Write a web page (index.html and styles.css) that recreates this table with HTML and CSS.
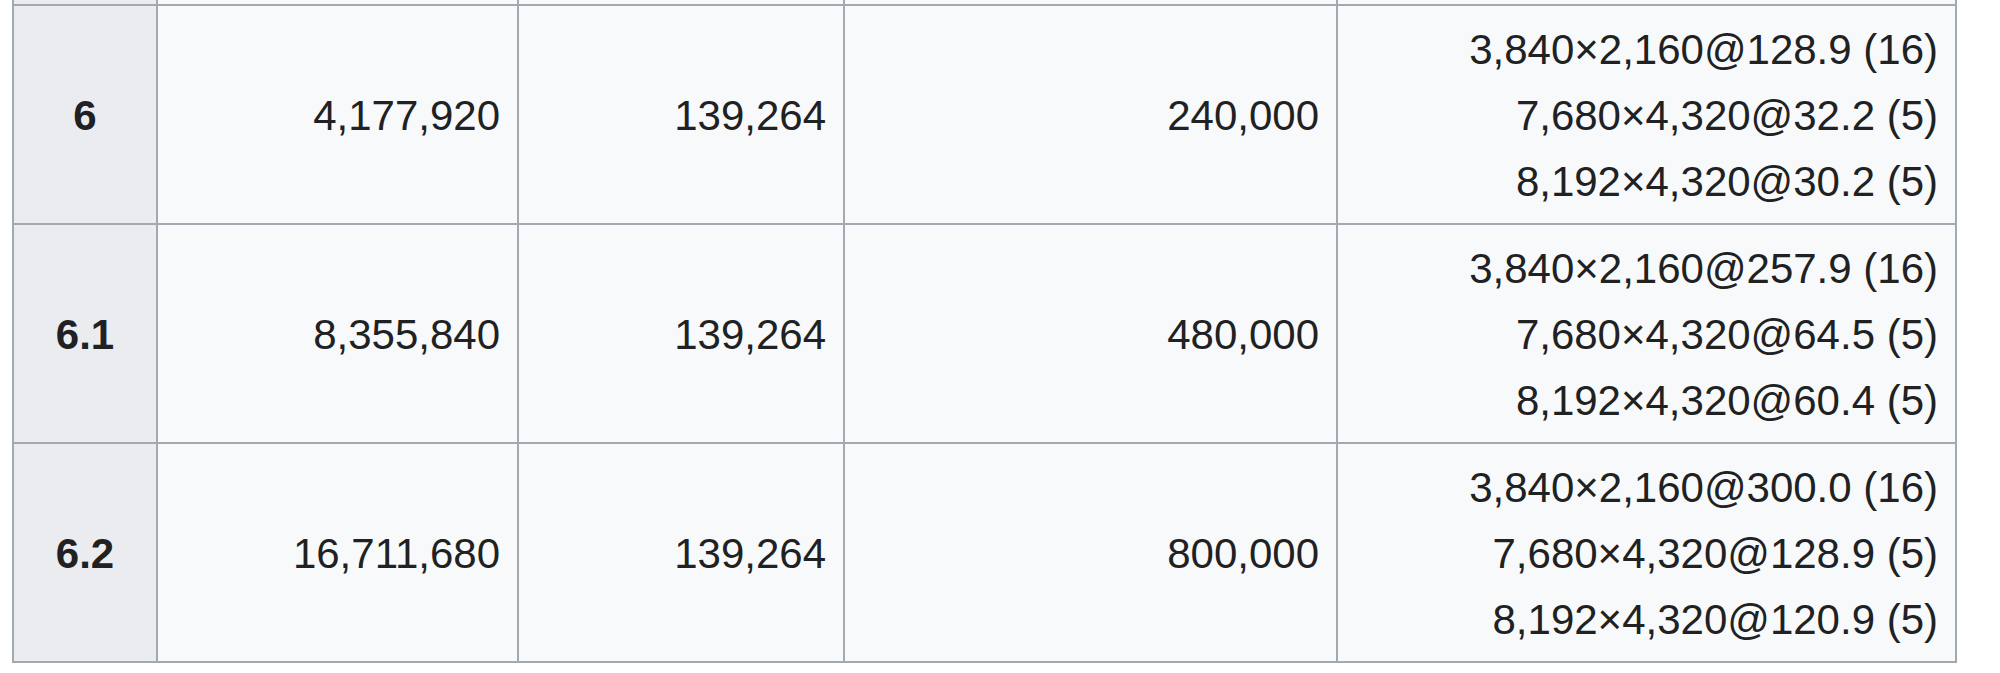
FILE: index.html
```html
<!DOCTYPE html>
<html lang="en">
<head>
<meta charset="utf-8">
<title>Levels</title>
<link rel="stylesheet" href="styles.css">
</head>
<body>
<table class="wikitable">
  <colgroup>
    <col class="c-level">
    <col class="c-a">
    <col class="c-b">
    <col class="c-c">
    <col class="c-d">
  </colgroup>
  <tbody>
    <tr class="stub">
      <th></th><td></td><td></td><td></td><td></td>
    </tr>
    <tr>
      <th>6</th>
      <td>4,177,920</td>
      <td>139,264</td>
      <td>240,000</td>
      <td>3,840×2,160@128.9 (16)<br>7,680×4,320@32.2 (5)<br>8,192×4,320@30.2 (5)</td>
    </tr>
    <tr>
      <th>6.1</th>
      <td>8,355,840</td>
      <td>139,264</td>
      <td>480,000</td>
      <td>3,840×2,160@257.9 (16)<br>7,680×4,320@64.5 (5)<br>8,192×4,320@60.4 (5)</td>
    </tr>
    <tr>
      <th>6.2</th>
      <td>16,711,680</td>
      <td>139,264</td>
      <td>800,000</td>
      <td>3,840×2,160@300.0 (16)<br>7,680×4,320@128.9 (5)<br>8,192×4,320@120.9 (5)</td>
    </tr>
  </tbody>
</table>
</body>
</html>
```

FILE: styles.css
```css
html, body {
  margin: 0;
  padding: 0;
  background: #ffffff;
}

body {
  font-family: "Liberation Sans", Arial, sans-serif;
  color: #202122;
}

.wikitable {
  margin: -2px 0 0 12px;
  width: 1945px;
  table-layout: fixed;
  border-collapse: separate;
  border-spacing: 2px;
  background: #a2a9b1;
  font-size: 42px;
  line-height: 66px;
}

.c-level { width: 142px; }
.c-a { width: 359px; }
.c-b { width: 324px; }
.c-c { width: 491px; }
.c-d { width: 617px; }

.wikitable th,
.wikitable td {
  box-sizing: border-box;
  height: 217px;
  padding: 11px 17px 8px;
  vertical-align: middle;
  background: #f8f9fa;
  text-align: right;
  font-weight: normal;
  white-space: nowrap;
}

.wikitable th {
  background: #eaecf0;
  text-align: center;
  font-weight: bold;
}

.wikitable .stub th,
.wikitable .stub td {
  height: 4px;
  padding: 0;
  font-size: 0;
  line-height: 0;
}
```
